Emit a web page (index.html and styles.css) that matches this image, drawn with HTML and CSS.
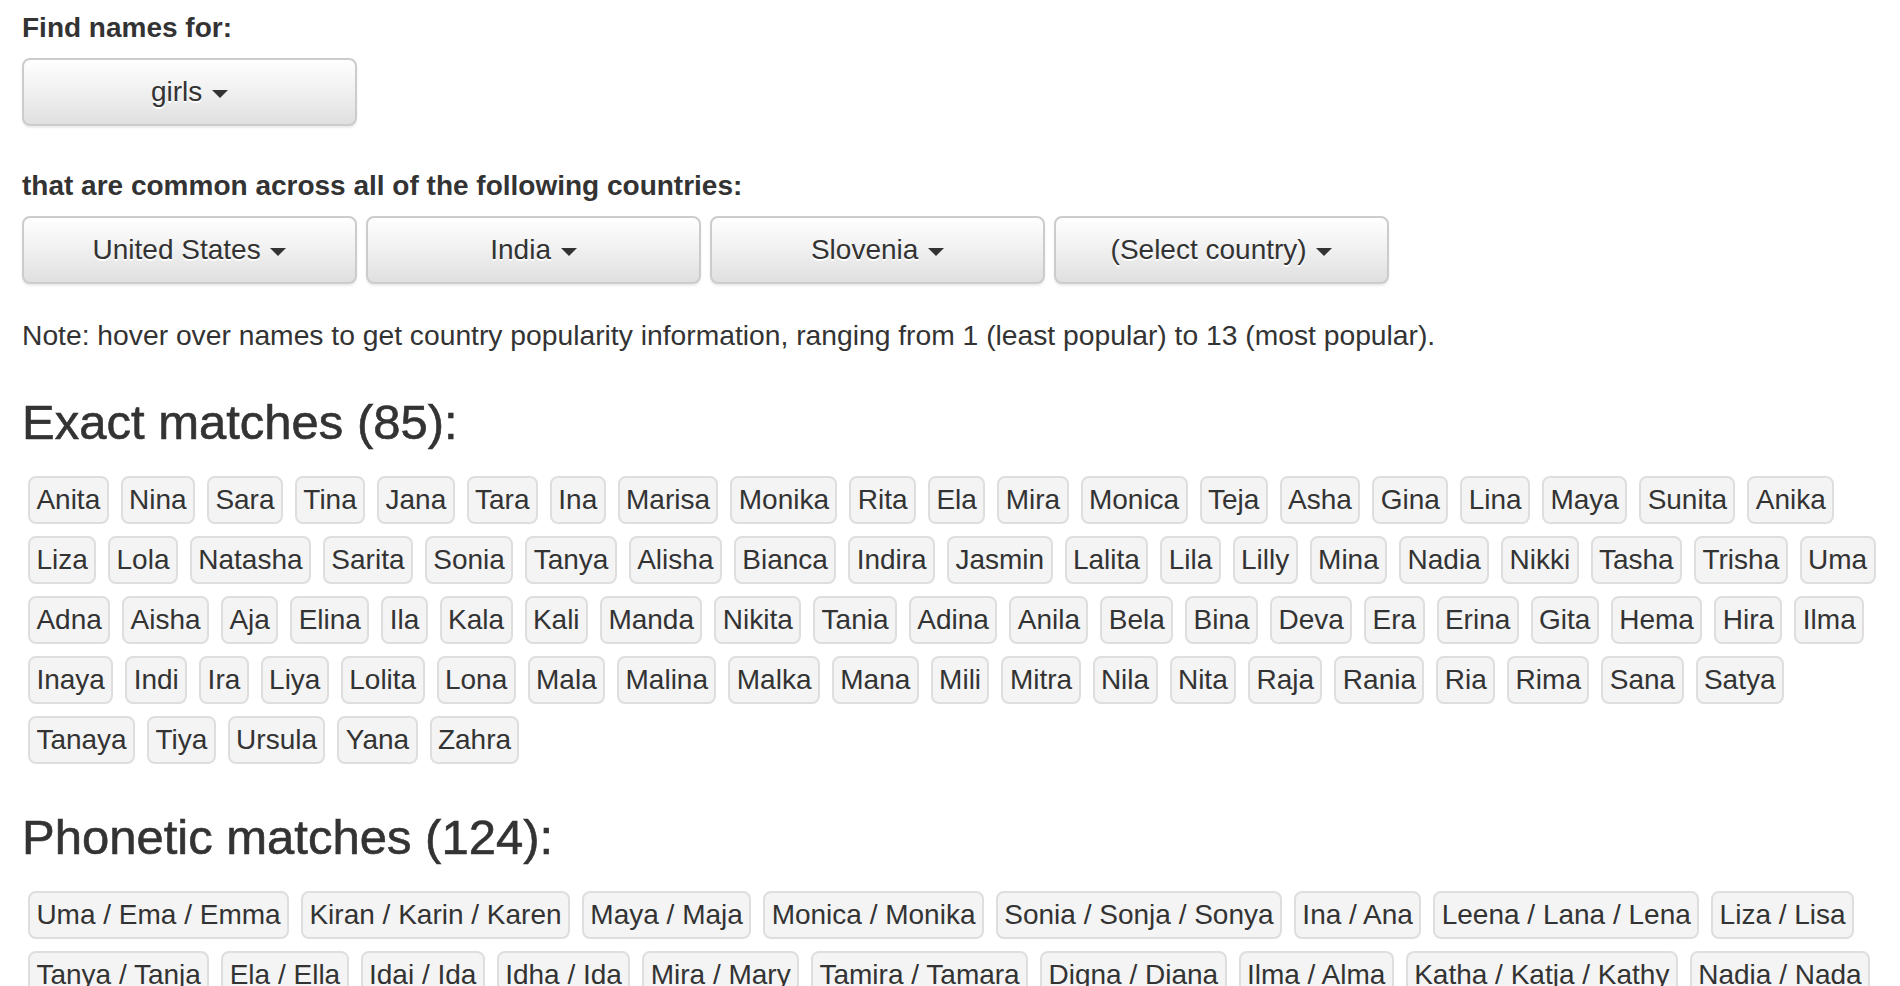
FILE: index.html
```html
<!DOCTYPE html>
<html lang="en">
<head>
<meta charset="utf-8">
<title>Find names</title>
<link rel="stylesheet" href="styles.css">
</head>
<body>
<div class="page">
  <div class="form-group">
    <label class="field-label">Find names for:</label>
    <div class="btn-row">
      <button class="btn">girls <span class="caret"></span></button>
    </div>
  </div>
  <div class="form-group">
    <label class="field-label">that are common across all of the following countries:</label>
    <div class="btn-row">
      <button class="btn">United States <span class="caret"></span></button>
      <button class="btn">India <span class="caret"></span></button>
      <button class="btn">Slovenia <span class="caret"></span></button>
      <button class="btn">(Select country) <span class="caret"></span></button>
    </div>
  </div>
  <p class="note">Note: hover over names to get country popularity information, ranging from 1 (least popular) to 13 (most popular).</p>

  <h3 class="section-title">Exact matches (85):</h3>
  <div class="tags">
    <span class="tag">Anita</span><span class="tag">Nina</span><span class="tag">Sara</span><span class="tag">Tina</span><span class="tag">Jana</span><span class="tag">Tara</span><span class="tag">Ina</span><span class="tag">Marisa</span><span class="tag">Monika</span><span class="tag">Rita</span><span class="tag">Ela</span><span class="tag">Mira</span><span class="tag">Monica</span><span class="tag">Teja</span><span class="tag">Asha</span><span class="tag">Gina</span><span class="tag">Lina</span><span class="tag">Maya</span><span class="tag">Sunita</span><span class="tag">Anika</span>
    <span class="tag">Liza</span><span class="tag">Lola</span><span class="tag">Natasha</span><span class="tag">Sarita</span><span class="tag">Sonia</span><span class="tag">Tanya</span><span class="tag">Alisha</span><span class="tag">Bianca</span><span class="tag">Indira</span><span class="tag">Jasmin</span><span class="tag">Lalita</span><span class="tag">Lila</span><span class="tag">Lilly</span><span class="tag">Mina</span><span class="tag">Nadia</span><span class="tag">Nikki</span><span class="tag">Tasha</span><span class="tag">Trisha</span><span class="tag">Uma</span>
    <span class="tag">Adna</span><span class="tag">Aisha</span><span class="tag">Aja</span><span class="tag">Elina</span><span class="tag">Ila</span><span class="tag">Kala</span><span class="tag">Kali</span><span class="tag">Manda</span><span class="tag">Nikita</span><span class="tag">Tania</span><span class="tag">Adina</span><span class="tag">Anila</span><span class="tag">Bela</span><span class="tag">Bina</span><span class="tag">Deva</span><span class="tag">Era</span><span class="tag">Erina</span><span class="tag">Gita</span><span class="tag">Hema</span><span class="tag">Hira</span><span class="tag">Ilma</span>
    <span class="tag">Inaya</span><span class="tag">Indi</span><span class="tag">Ira</span><span class="tag">Liya</span><span class="tag">Lolita</span><span class="tag">Lona</span><span class="tag">Mala</span><span class="tag">Malina</span><span class="tag">Malka</span><span class="tag">Mana</span><span class="tag">Mili</span><span class="tag">Mitra</span><span class="tag">Nila</span><span class="tag">Nita</span><span class="tag">Raja</span><span class="tag">Rania</span><span class="tag">Ria</span><span class="tag">Rima</span><span class="tag">Sana</span><span class="tag">Satya</span>
    <span class="tag">Tanaya</span><span class="tag">Tiya</span><span class="tag">Ursula</span><span class="tag">Yana</span><span class="tag">Zahra</span>
  </div>

  <h3 class="section-title">Phonetic matches (124):</h3>
  <div class="tags">
    <span class="tag">Uma / Ema / Emma</span><span class="tag">Kiran / Karin / Karen</span><span class="tag">Maya / Maja</span><span class="tag">Monica / Monika</span><span class="tag">Sonia / Sonja / Sonya</span><span class="tag">Ina / Ana</span><span class="tag">Leena / Lana / Lena</span><span class="tag">Liza / Lisa</span>
    <span class="tag">Tanya / Tanja</span><span class="tag">Ela / Ella</span><span class="tag">Idai / Ida</span><span class="tag">Idha / Ida</span><span class="tag">Mira / Mary</span><span class="tag">Tamira / Tamara</span><span class="tag">Digna / Diana</span><span class="tag">Ilma / Alma</span><span class="tag">Katha / Katja / Kathy</span><span class="tag">Nadia / Nada</span>
    <span class="tag">Sara / Sarah</span><span class="tag">Nina / Nena</span><span class="tag">Tina / Tena</span><span class="tag">Lila / Lilla</span><span class="tag">Hana / Hanna</span><span class="tag">Rina / Rena</span><span class="tag">Mala / Malla</span>
  </div>
</div>
</body>
</html>
```

FILE: styles.css
```css
html, body {
  margin: 0;
  padding: 0;
  background: #ffffff;
}

body {
  font-family: "Liberation Sans", Arial, Helvetica, sans-serif;
  font-size: 28px;
  line-height: 40px;
  color: #333333;
}

.page {
  padding: 8px 16px 40px 22px;
}

.form-group {
  display: flex;
  flex-direction: column;
  align-items: flex-start;
  margin-bottom: 40px;
}

.field-label {
  font-weight: bold;
  margin-bottom: 10px;
}

.btn-row {
  display: flex;
  gap: 9px;
}

.btn {
  width: 335px;
  height: 68px;
  padding: 12px 24px;
  font-family: inherit;
  font-size: 28px;
  line-height: 40px;
  color: #333333;
  text-align: center;
  text-shadow: 0 2px 0 #ffffff;
  background-color: #e0e0e0;
  background-image: linear-gradient(to bottom, #ffffff 0%, #e0e0e0 100%);
  border: 2px solid #cccccc;
  border-radius: 8px;
  box-shadow: inset 0 2px 0 rgba(255, 255, 255, 0.15), 0 2px 2px rgba(0, 0, 0, 0.075);
  cursor: pointer;
}

.caret {
  display: inline-block;
  width: 0;
  height: 0;
  margin-left: 2px;
  vertical-align: middle;
  border-top: 8px solid #333333;
  border-left: 8px solid transparent;
  border-right: 8px solid transparent;
}

.note {
  margin: -9px 0 0 0;
  font-size: 28.25px;
}

.section-title {
  font-size: 49px;
  font-weight: normal;
  line-height: 1.1;
  margin: 41px 0 20px 0;
  color: #333333;
  -webkit-text-stroke: 0.6px #333333;
}

.tags {
  display: flex;
  flex-wrap: wrap;
}

.tag {
  display: inline-block;
  margin: 6px;
  padding: 2px 6.4px;
  background: #f4f4f4;
  border: 2px solid #dedede;
  border-radius: 8px;
  line-height: 40px;
  white-space: nowrap;
}
```
